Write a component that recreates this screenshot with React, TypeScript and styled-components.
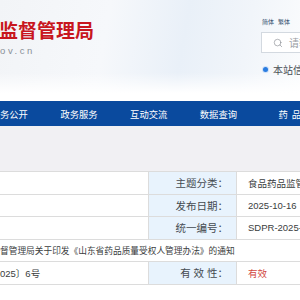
import React from 'react';
import styled, { createGlobalStyle } from 'styled-components';
import { Search } from 'lucide-react';

const GlobalStyle = createGlobalStyle`
  html, body {
    margin: 0;
    padding: 0;
    background: #ffffff;
  }
  body {
    font-family: "Liberation Sans", "Noto Sans CJK SC", sans-serif;
  }
`;

const Page = styled.div`
  width: 300px;
  height: 300px;
  overflow: hidden;
  display: flex;
  flex-direction: column;
  background: #ffffff;
`;

const Header = styled.header`
  height: 101px;
  flex: 0 0 auto;
  display: flex;
  background:
    linear-gradient(180deg, rgba(255, 255, 255, 0) 72%, #ffffff 92%),
    linear-gradient(100deg, #f2f4f7 0%, #f6f8fb 35%, #e9f0f8 60%, #f1f5fa 80%, #fbfcfd 100%);
`;

const Brand = styled.div`
  flex: 1;
  min-width: 0;
  padding-top: 17px;
  display: flex;
  flex-direction: column;
`;

const SiteTitle = styled.div`
  font-family: "Noto Sans CJK SC", sans-serif;
  font-size: 19px;
  line-height: 26px;
  font-weight: 700;
  color: #c8161e;
  margin-left: -1px;
  white-space: nowrap;
`;

const Domain = styled.div`
  margin-top: 2px;
  font-size: 9.5px;
  line-height: 12px;
  letter-spacing: 2.6px;
  color: #8a9098;
`;

const Tools = styled.div`
  flex: 0 0 39px;
  width: 39px;
  min-width: 0;
  padding-top: 19px;
  display: flex;
  flex-direction: column;
`;

const LangSwitch = styled.div`
  display: flex;
  gap: 4px;
  padding-left: 1px;
  font-family: "Noto Sans CJK SC", sans-serif;
  font-size: 6px;
  line-height: 6px;
  color: #2f4b6b;
  white-space: nowrap;
`;

const SearchBox = styled.div`
  margin-top: 7px;
  width: 150px;
  flex: 0 0 auto;
  height: 21px;
  box-sizing: border-box;
  border: 1px solid #d3d9e0;
  background: #ffffff;
  display: flex;
  align-items: center;
  padding-left: 11px;
  gap: 6px;
  color: #7d8288;
`;

const Placeholder = styled.span`
  font-family: "Noto Sans CJK SC", sans-serif;
  font-size: 10px;
  color: #9a9ea4;
  white-space: nowrap;
`;

const ScopeRow = styled.div`
  margin-top: 11px;
  width: 150px;
  height: 10px;
  display: flex;
  align-items: center;
  gap: 5px;
  padding-left: 2px;
  white-space: nowrap;
`;

const RadioDot = styled.span`
  flex: 0 0 auto;
  width: 5px;
  height: 5px;
  border-radius: 50%;
  background: #2a7ce0;
  box-shadow: 0 0 0 1px #cfe1f8;
`;

const ScopeLabel = styled.span`
  font-family: "Noto Sans CJK SC", sans-serif;
  font-size: 10px;
  color: #4a4f55;
`;

const Nav = styled.nav`
  height: 25px;
  flex: 0 0 auto;
  background: #0a4a9e;
  display: flex;
  align-items: center;
  gap: 32.5px;
  white-space: nowrap;
`;

const NavItem = styled.span<{ spaced?: boolean }>`
  font-family: "Noto Sans CJK SC", sans-serif;
  font-size: 9.3px;
  color: #ffffff;
  letter-spacing: ${({ spaced }) => (spaced ? '4px' : '0')};
  margin-left: ${({ spaced }) => (spaced ? '9px' : '0')};
`;

const Content = styled.section`
  flex: 1;
  background: #f1f0f3;
  padding-top: 45px;
  display: flex;
  flex-direction: column;
`;

const Panel = styled.div`
  flex: 1;
  background: #ffffff;
`;

const InfoTable = styled.div`
  display: grid;
  grid-template-columns: 149px 88px 1fr;
  grid-auto-rows: 22.5px;
  border-top: 1px solid #dcdcdc;
`;

const Cell = styled.div<{ kind?: 'label' | 'value' | 'blank' | 'wide' }>`
  box-sizing: border-box;
  border-bottom: 1px solid #dcdcdc;
  border-right: ${({ kind }) => (kind === 'value' || kind === 'wide' ? 'none' : '1px solid #dcdcdc')};
  grid-column: ${({ kind }) => (kind === 'wide' ? '1 / -1' : 'auto')};
  background: ${({ kind }) => (kind === 'label' ? '#e8f3fd' : '#ffffff')};
  display: flex;
  align-items: center;
  justify-content: ${({ kind }) => (kind === 'label' ? 'flex-end' : 'flex-start')};
  padding: ${({ kind }) => (kind === 'label' ? '0 8px 0 0' : kind === 'value' ? '0 0 0 11px' : '0')};
  font-family: "Liberation Sans", "Noto Sans CJK SC", sans-serif;
  font-size: ${({ kind }) => (kind === 'label' ? '10.5px' : kind === 'wide' ? '8.7px' : '9.5px')};
  color: ${({ kind }) => (kind === 'label' ? '#444a50' : '#3a3d40')};
  white-space: nowrap;
  overflow: hidden;
`;

const Status = styled.span`
  color: #d2473e;
`;

const rows = [
  { label: '主题分类：', value: '食品药品监管' },
  { label: '发布日期：', value: '2025-10-16' },
  { label: '统一编号：', value: 'SDPR-2025-0' },
];

const navItems = ['务公开', '政务服务', '互动交流', '数据查询'];

export default function App() {
  return (
    <Page>
      <GlobalStyle />
      <Header>
        <Brand>
          <SiteTitle>监督管理局</SiteTitle>
          <Domain>ov.cn</Domain>
        </Brand>
        <Tools>
          <LangSwitch>
            <span>简体</span>
            <span>繁体</span>
          </LangSwitch>
          <SearchBox>
            <Search size={10} strokeWidth={1.4} />
            <Placeholder>请输入关键词</Placeholder>
          </SearchBox>
          <ScopeRow>
            <RadioDot />
            <ScopeLabel>本站信息</ScopeLabel>
          </ScopeRow>
        </Tools>
      </Header>
      <Nav>
        {navItems.map((item) => (
          <NavItem key={item}>{item}</NavItem>
        ))}
        <NavItem spaced>药品</NavItem>
      </Nav>
      <Content>
        <Panel>
          <InfoTable>
            {rows.map((row) => (
              <React.Fragment key={row.label}>
                <Cell kind="blank" />
                <Cell kind="label">{row.label}</Cell>
                <Cell kind="value">{row.value}</Cell>
              </React.Fragment>
            ))}
            <Cell kind="wide">督管理局关于印发《山东省药品质量受权人管理办法》的通知</Cell>
            <Cell kind="blank">025〕6号</Cell>
            <Cell kind="label">有 效 性：</Cell>
            <Cell kind="value">
              <Status>有效</Status>
            </Cell>
          </InfoTable>
        </Panel>
      </Content>
    </Page>
  );
}
